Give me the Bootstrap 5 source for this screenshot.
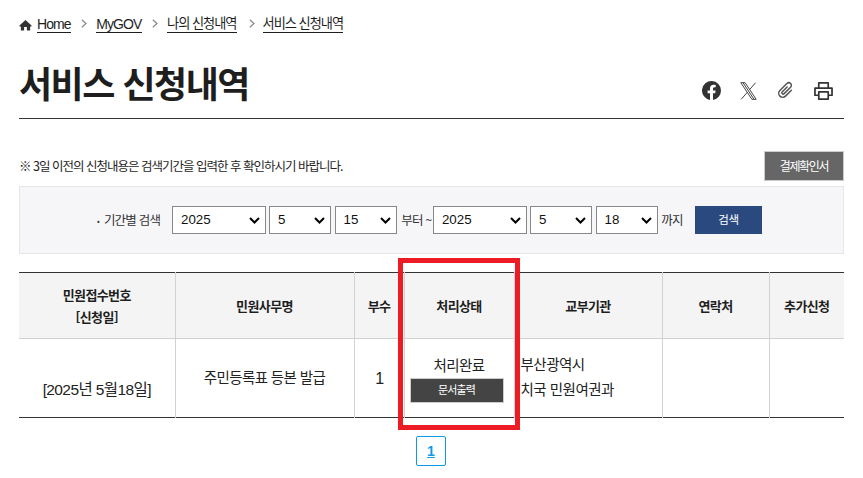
<!DOCTYPE html>
<html lang="ko">
<head>
  <meta charset="UTF-8" />
  <meta name="viewport" content="width=device-width, initial-scale=1" />
  <title>서비스 신청내역</title>
  <link href="https://cdn.jsdelivr.net/npm/bootstrap@5.3.0/dist/css/bootstrap.min.css" rel="stylesheet" />
  <style>
    body {
      font-family: "Noto Sans CJK KR", "Liberation Sans", sans-serif;
      color: #1e1e1e;
      background: #fff;
      overflow: hidden;
    }
    .page-wrap { position: relative; height: 478px; padding: 13px 19px 0; }

    /* breadcrumb */
    .crumbs { height: 20px; font-family: "Liberation Sans", "Noto Sans CJK KR", sans-serif; font-size: 14px; letter-spacing: -0.9px; line-height: 18px; }
    .crumbs a { color: #1e1e1e; text-decoration: none; border-bottom: 1px solid #1e1e1e; display: block; height: 20px; padding-top: 2px; }
    .crumbs a.crumb-ko { font-size: 13.2px; letter-spacing: -1px; }
    .crumb-home { flex: none; margin: 4px 5px 0 0; }
    .crumb-sep { flex: none; width: 6px; height: 9px; margin: 1px 9px 0 10.5px; }
    .crumb-sep-last { margin: 1px 8px 0 12px; }

    /* title */
    .title-row { height: 86px; border-bottom: 1px solid #333; padding-right: 11px; }
    .title-row h1 { font-size: 36px; font-weight: 700; letter-spacing: -1.5px; line-height: 54px; margin: 22px 0 0; }
    .share-icons { gap: 19px; margin-top: 48px; }

    /* notice */
    .notice-row { height: 67px; padding-top: 32px; }
    .notice-text { font-size: 12.5px; letter-spacing: -1px; margin-top: 5px; line-height: 20px; }
    .btn-confirm {
      width: 80px; height: 30px; padding: 0; border-radius: 0; font-size: 12px; letter-spacing: -1.3px;
      background: #666; border: 1px solid #ccc; color: #fff;
    }

    /* search box */
    .search-box {
      height: 68px; background: #f6f6f9; border: 1px solid #e6e6ea;
      padding-left: 77px; font-size: 12.5px; letter-spacing: -0.8px; color: #333;
    }
    .search-label { width: 72px; margin-right: 3px; }
    .search-label::before { content: "•"; font-size: 8px; margin-right: 5px; vertical-align: 1px; }
    .search-box .form-select {
      height: 28px; padding: 0 0 0 8px; border: 1px solid #888; border-radius: 0; color: #111;
      font-family: "Liberation Sans", sans-serif; font-size: 13.33px; letter-spacing: 0; flex: none;
      background-image: url("data:image/svg+xml,%3csvg xmlns='http://www.w3.org/2000/svg' viewBox='0 0 11 7'%3e%3cpath fill='none' stroke='%23000' stroke-width='2' d='M1 1l4.500 4.500L10 1'/%3e%3c/svg%3e");
      background-size: 11px 7px; background-position: right 5px center;
    }
    .sel-y { width: 93.7px; margin-left: 3.3px; }
    .sel-m { width: 62.3px; margin-left: 3.3px; }
    .sel-d { width: 62.7px; margin-left: 3.3px; }
    .search-box .sel-first { margin-left: 0; }
    .range-word { margin: 0 1.7px 0 4px; width: 30px; }
    .end-word { margin-left: 3px; width: 22px; }
    .btn-search {
      width: 67px; height: 28px; padding: 0; border: 0; border-radius: 0; background: #2a4a7f; color: #fff;
      font-size: 11.5px; letter-spacing: -0.3px; margin-left: 11.7px; flex: none;
    }

    /* result table */
    .result-table { table-layout: fixed; width: 825px; margin: 18px 0 0; border-top: 1px solid #333; border-bottom: 1px solid #333; }
    .result-table th, .result-table td {
      border-left: 1px solid #d2d2d2; padding: 0; text-align: center; vertical-align: middle; letter-spacing: -0.6px;
    }
    .result-table th:first-child, .result-table td:first-child { border-left: 0; }
    .result-table th {
      height: 66px; background: #f4f4f4; font-size: 13px; font-weight: 700; line-height: 22px; border-bottom: 1px solid #d2d2d2;
    }
    .result-table td { height: 79px; font-family: "Liberation Sans", "Noto Sans CJK KR", sans-serif; font-size: 14.5px; line-height: 25px; color: #222; }
    .result-table .date-cell { padding-top: 22px; font-size: 15.5px; }
    .result-table .count-cell { font-size: 16px; padding-left: 1px; }
    .result-table .org-cell { text-align: left; padding-left: 6px; letter-spacing: -0.5px; }
    .btn-doc {
      display: block; width: 94px; height: 25px; margin: -1px 0 0 5px; padding: 0 0 1px; border-radius: 0;
      background: #444; border: 1px solid #ccc; color: #fff; font-size: 11px; letter-spacing: -0.9px; line-height: 20px;
    }

    /* pager */
    .pager-row { padding: 18px 2px 0 0; }
    .pager-link {
      display: block; width: 30px; height: 30px; border: 1px solid #0d9be8; border-radius: 2px; color: #0d9be8;
      font-family: "Liberation Sans", sans-serif; font-size: 14px; font-weight: 700; line-height: 28px; text-align: center; padding-left: 1px;
    }

    /* red marker lying over the table */
    .red-mark { position: absolute; left: 398px; top: 258px; width: 122px; height: 172px; border: 5px solid #ed1c24; pointer-events: none; }
  </style>
</head>
<body>
  <div class="page-wrap">
    <nav class="crumbs d-flex align-items-center">
      <svg class="crumb-home" width="13" height="12" viewBox="0 0 14 12"><path d="M7 0.5 0.5 6.6V7.6H2V12H5.5V8.2H8.5V12H12V7.6H13.5V6.6Z" fill="#333"/></svg>
      <a href="#">Home</a>
      <svg class="crumb-sep" viewBox="0 0 6 9"><path d="M.8 .7 5 4.500 .8 8.300" fill="none" stroke="#888" stroke-width="1.2"/></svg>
      <a href="#">MyGOV</a>
      <svg class="crumb-sep" viewBox="0 0 6 9"><path d="M.8 .7 5 4.500 .8 8.300" fill="none" stroke="#888" stroke-width="1.2"/></svg>
      <a class="crumb-ko" href="#">나의 신청내역</a>
      <svg class="crumb-sep crumb-sep-last" viewBox="0 0 6 9"><path d="M.8 .7 5 4.500 .8 8.300" fill="none" stroke="#888" stroke-width="1.2"/></svg>
      <a class="crumb-ko" href="#">서비스 신청내역</a>
    </nav>

    <div class="title-row d-flex justify-content-between align-items-start">
      <h1>서비스 신청내역</h1>
      <div class="share-icons d-flex align-items-center">
        <svg width="19" height="19" viewBox="0 0 18 18"><path fill="#333" d="M18 9a9 9 0 1 0-10.400 8.900v-6.300H5.300V9h2.300V7c0-2.300 1.300-3.500 3.400-3.500 1 0 2 .2 2 .2v2.200h-1.100c-1.100 0-1.500.7-1.500 1.400V9h2.500l-.4 2.600h-2.100v6.300A9 9 0 0 0 18 9z"/></svg>
        <svg width="17" height="18" viewBox="0 0 17 18"><path fill="none" stroke="#444" stroke-width="1" d="M.8 .7h4.300l11.100 16.600h-4.300zM3 .7l11 16.600M15.600 .7 9.500 7.700M7.300 10.300 1.200 17.300"/></svg>
        <svg width="19" height="19" viewBox="0 0 24 24"><g transform="rotate(45 12 12)"><path fill="none" stroke="#555" stroke-width="1.900" stroke-linecap="round" d="M17 6.500V17a5 5 0 0 1-10 0V4.500a3.300 3.300 0 0 1 6.600 0V16a1.600 1.600 0 0 1-3.200 0V7.500"/></g></svg>
        <svg width="19" height="18" viewBox="0 0 20 19"><path fill="none" stroke="#333" stroke-width="1.800" stroke-linejoin="round" d="M5 6.500V1h10v5.500M5 14H1V6.500h18V14h-4M5 10.500h10V18H5z"/></svg>
      </div>
    </div>

    <div class="notice-row d-flex justify-content-between align-items-start">
      <p class="notice-text mb-0">※ 3일 이전의 신청내용은 검색기간을 입력한 후 확인하시기 바랍니다.</p>
      <button type="button" class="btn btn-confirm">결제확인서</button>
    </div>

    <form class="search-box d-flex align-items-center">
      <span class="search-label text-nowrap">기간별 검색</span>
      <select class="form-select sel-y sel-first"><option>2025</option></select>
      <select class="form-select sel-m"><option>5</option></select>
      <select class="form-select sel-d"><option>15</option></select>
      <span class="range-word text-nowrap">부터 ~</span>
      <select class="form-select sel-y sel-first"><option>2025</option></select>
      <select class="form-select sel-m"><option>5</option></select>
      <select class="form-select sel-d"><option>18</option></select>
      <span class="end-word text-nowrap">까지</span>
      <button type="button" class="btn btn-search">검색</button>
    </form>

    <table class="result-table">
      <colgroup>
        <col style="width:156px" /><col style="width:179px" /><col style="width:50px" /><col style="width:110px" />
        <col style="width:148px" /><col style="width:107px" /><col style="width:75px" />
      </colgroup>
      <thead>
        <tr>
          <th>민원접수번호<br />[신청일]</th>
          <th>민원사무명</th>
          <th>부수</th>
          <th>처리상태</th>
          <th>교부기관</th>
          <th>연락처</th>
          <th>추가신청</th>
        </tr>
      </thead>
      <tbody>
        <tr>
          <td class="date-cell">[2025년 5월18일]</td>
          <td>주민등록표 등본 발급</td>
          <td class="count-cell">1</td>
          <td>처리완료<button type="button" class="btn btn-doc">문서출력</button></td>
          <td class="org-cell">부산광역시<br />치국 민원여권과</td>
          <td></td>
          <td></td>
        </tr>
      </tbody>
    </table>

    <div class="pager-row d-flex justify-content-center">
      <a class="pager-link" href="#">1</a>
    </div>

    <div class="red-mark"></div>
  </div>
  <script src="https://cdn.jsdelivr.net/npm/bootstrap@5.3.0/dist/js/bootstrap.bundle.min.js"></script>
</body>
</html>
